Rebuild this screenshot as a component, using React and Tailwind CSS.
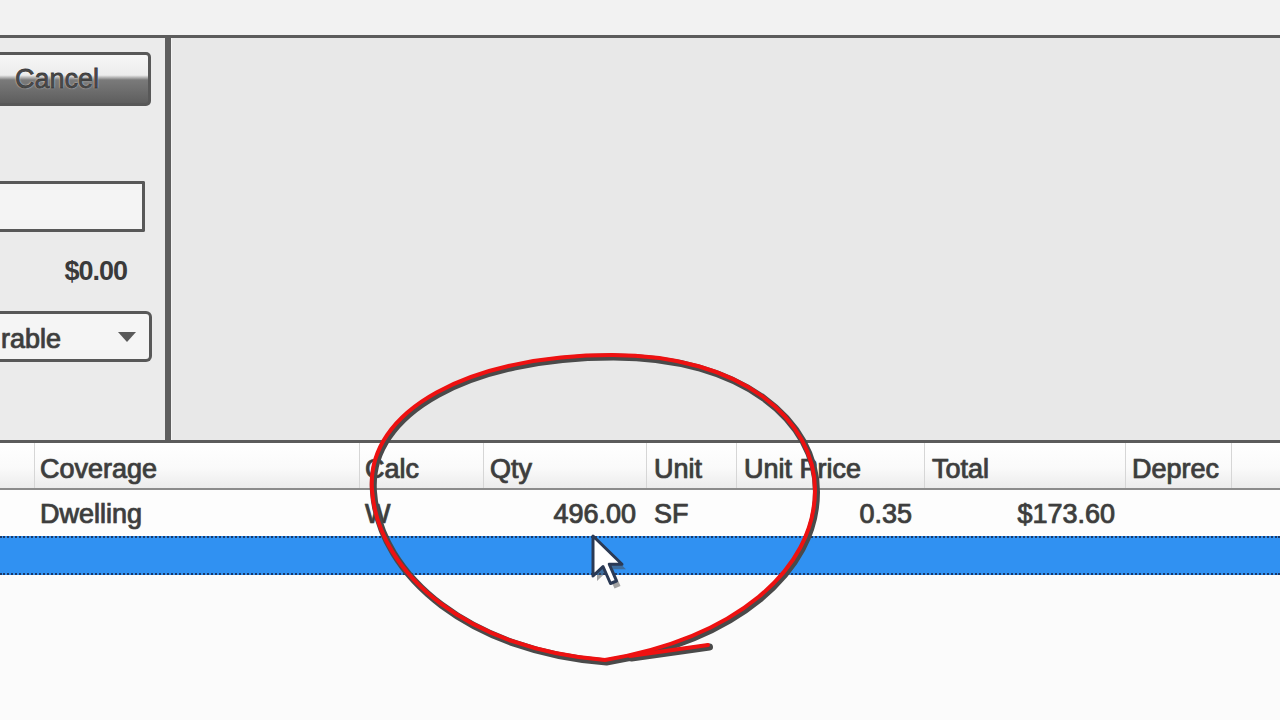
import React from 'react';

const txt = 'text-[27px] leading-none text-[#3c3c3c] [-webkit-text-stroke:0.7px_#454545] [text-shadow:0_0_1px_#666]';

const headers = [
  { label: '', cls: '' },
  { label: 'Coverage', cls: 'pl-[5px]' },
  { label: 'Calc', cls: 'pl-[5px]' },
  { label: 'Qty', cls: 'pl-[6px]' },
  { label: 'Unit', cls: 'pl-[7px]' },
  { label: 'Unit Price', cls: 'pl-[7px]' },
  { label: 'Total', cls: 'pl-[7px]' },
  { label: 'Deprec', cls: 'pl-[6px]' },
  { label: '', cls: '' },
];

const row = [
  { v: '', cls: '' },
  { v: 'Dwelling', cls: 'pl-[5px]' },
  { v: 'W', cls: 'pl-[5px]' },
  { v: '496.00', cls: 'justify-end pr-[11px]' },
  { v: 'SF', cls: 'pl-[7px]' },
  { v: '0.35', cls: 'justify-end pr-[13px]' },
  { v: '$173.60', cls: 'justify-end pr-[11px]' },
  { v: '', cls: '' },
  { v: '', cls: '' },
];

const cols = 'grid grid-cols-[35px_325px_124px_163px_90px_188px_201px_106px_1fr]';

function Cancel() {
  return (
    <div className="ml-[-20px] mt-[14px] h-[54px] w-[171px] rounded-r-[5px] border-[3px] border-l-0 border-[#585858] bg-[linear-gradient(#f6f6f6_0%,#ececec_42%,#7a7a7a_52%,#5e5e5e_100%)] flex items-center pl-[35px]">
      <span className="text-[27px] leading-none text-[#4a4a4a] [-webkit-text-stroke:0.8px_#3a3a3a] [text-shadow:0_0_2px_#fff,0_0_1px_#fff]">Cancel</span>
    </div>
  );
}

export default function App() {
  return (
    <div className="relative w-[1280px] h-[720px] overflow-hidden bg-[#fbfbfb] font-['Liberation_Sans',Arial,sans-serif]">
      <div className="h-[35px] bg-[#f2f2f2]" />
      <div className="h-[3px] bg-[#5c5c5c]" />

      <div className="flex h-[402px]">
        <div className="w-[165px] bg-[#ebebeb] flex flex-col overflow-hidden">
          <Cancel />
          <div className="mt-[75px] ml-[-10px] h-[51px] w-[155px] rounded-r-[2px] border-[3px] border-l-0 border-[#585858] bg-[#f4f4f4]" />
          <div className="mt-[22px] h-[34px] w-[127px] flex items-center justify-end">
            <span className="text-[27px] leading-none font-bold text-[#3a3a3a] tracking-[-1px]">$0.00</span>
          </div>
          <div className="mt-[23px] ml-[-10px] h-[51px] w-[162px] rounded-r-[6px] border-[3px] border-l-0 border-[#585858] bg-[#f5f5f5] flex items-center justify-between pr-[12px] pt-[5px]">
            <span className={`${txt} ml-[11px]`}>rable</span>
            <svg width="20" height="12" viewBox="0 0 20 12" className="-mt-[5px]"><path d="M1 1 L19 1 L10 11 Z" fill="#5a5a5a" /></svg>
          </div>
        </div>
        <div className="w-[6px] bg-[#5e5e5e]" />
        <div className="flex-1 bg-[#e8e8e8] border-l border-[#f3f3f3]" />
      </div>

      <div className="h-[3px] bg-[#5c5c5c]" />

      <div className={`${cols} h-[45px] bg-[linear-gradient(#ffffff_0%,#fafafa_55%,#ececec_100%)]`}>
        {headers.map((h, i) => (
          <div key={i} className={`flex items-center pt-[7px] border-r border-[#d6d6d6] ${h.cls} ${i === 8 ? 'border-r-0' : ''}`}>
            <span className={txt}>{h.label}</span>
          </div>
        ))}
      </div>
      <div className="h-[2px] bg-[#8c8c8c]" />

      <div className={`${cols} h-[46px] bg-[#fdfdfd]`}>
        {row.map((c, i) => (
          <div key={i} className={`flex items-center pt-[3px] ${c.cls}`}>
            <span className={txt}>{c.v}</span>
          </div>
        ))}
      </div>

      <div className="h-[39px] bg-[#3091f2] border-y-2 border-dotted border-[#1b3a6a]" />

      {/* annotation + cursor */}
      <svg className="absolute left-0 top-0 pointer-events-none" width="1280" height="720" viewBox="0 0 1280 720">
        <g fill="none" strokeLinecap="round" strokeLinejoin="round">
          <g stroke="#4a4a4a" strokeWidth="7" transform="translate(1.5 2)">
            <path d="M605 660 C470 650 378 575 372 490 C366 410 470 355 612 355 C742 355 815 420 815 490 C815 570 735 638 605 660" />
            <path d="M630 656 L708 645" />
          </g>
          <g stroke="#ee1111" strokeWidth="4">
            <path d="M605 660 C470 650 378 575 372 490 C366 410 470 355 612 355 C742 355 815 420 815 490 C815 570 735 638 605 660" />
            <path d="M630 656 L708 645" />
          </g>
        </g>
        <g transform="translate(595 539) scale(2.5)">
          <path d="M0 0 L0 16 L4 12.2 L7 19 L9.4 18 L6.5 11.3 L11.6 11.3 Z" fill="#4a4a4a" opacity="0.5" transform="translate(0.8 0.8)" />
        </g>
        <g transform="translate(593 536) scale(2.5)">
          <path d="M0 0 L0 16 L4 12.2 L7 19 L9.4 18 L6.5 11.3 L11.6 11.3 Z" fill="#ffffff" stroke="#2b3a55" strokeWidth="1.2" strokeLinejoin="round" />
        </g>
      </svg>
    </div>
  );
}
